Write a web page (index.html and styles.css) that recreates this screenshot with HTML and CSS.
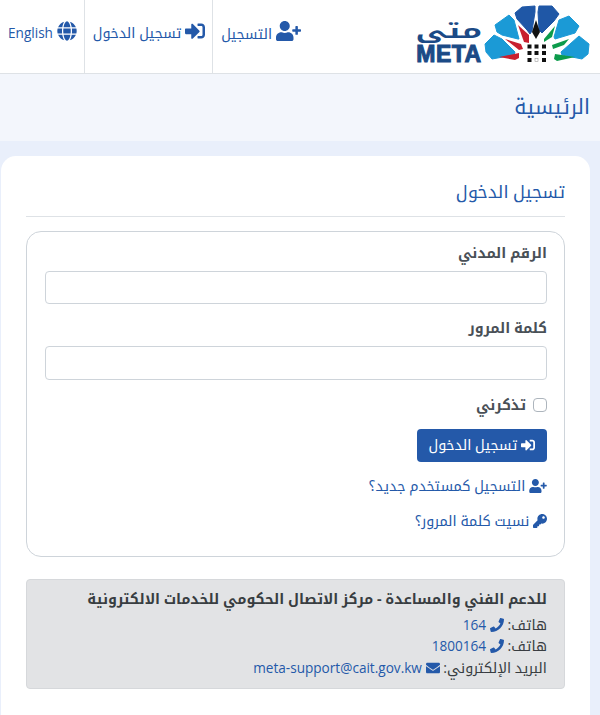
FILE: index.html
```html
<!DOCTYPE html>
<html lang="ar" dir="rtl">
  <head>
    <meta charset="UTF-8" />
    <title>تسجيل الدخول</title>
    <link rel="stylesheet" href="styles.css">
  </head>
  <body>
    <svg class="icon-defs" xmlns="http://www.w3.org/2000/svg">
      <symbol id="i-user-plus" viewBox="0 0 640 512"><path d="M624 208h-64v-64c0-8.800-7.200-16-16-16h-32c-8.800 0-16 7.200-16 16v64h-64c-8.800 0-16 7.200-16 16v32c0 8.800 7.200 16 16 16h64v64c0 8.800 7.200 16 16 16h32c8.800 0 16-7.200 16-16v-64h64c8.800 0 16-7.200 16-16v-32c0-8.800-7.200-16-16-16zm-400 48c70.700 0 128-57.300 128-128S294.700 0 224 0 96 57.300 96 128s57.300 128 128 128zm89.600 32h-16.700c-22.200 10.200-46.900 16-72.900 16s-50.600-5.800-72.900-16h-16.700C60.200 288 0 348.200 0 422.400V464c0 26.500 21.500 48 48 48h352c26.500 0 48-21.500 48-48v-41.600c0-74.200-60.200-134.400-134.400-134.400z"/></symbol>
      <symbol id="i-sign-in" viewBox="0 0 512 512"><path d="M416 448h-84c-6.600 0-12-5.400-12-12v-40c0-6.600 5.400-12 12-12h84c17.700 0 32-14.300 32-32V160c0-17.700-14.300-32-32-32h-84c-6.600 0-12-5.400-12-12V76c0-6.600 5.400-12 12-12h84c53 0 96 43 96 96v192c0 53-43 96-96 96zm-47-201L201 79c-15-15-41-4.500-41 17v96H24c-13.300 0-24 10.700-24 24v96c0 13.300 10.700 24 24 24h136v96c0 21.500 26 32 41 17l168-168c9.300-9.400 9.300-24.600 0-34z"/></symbol>
      <symbol id="i-globe" viewBox="0 0 496 512"><path d="M336.500 160C322 70.700 287.800 8 248 8s-74 62.700-88.500 152h177zM152 256c0 22.200 1.200 43.500 3.300 64h185.300c2.100-20.500 3.300-41.800 3.300-64s-1.200-43.500-3.300-64H155.300c-2.100 20.500-3.300 41.800-3.300 64zm324.700-96c-28.600-67.900-86.500-120.400-158-141.600 24.400 33.800 41.200 84.700 50 141.600h108zM177.200 18.400C105.800 39.600 47.800 92.100 19.300 160h108c8.700-56.900 25.500-107.800 49.900-141.600zM487.400 192H372.700c2.100 21 3.300 42.500 3.300 64s-1.200 43-3.300 64h114.600c5.500-20.500 8.600-41.800 8.600-64s-3.100-43.500-8.500-64zM120 256c0-21.500 1.200-43 3.300-64H8.600C3.200 212.500 0 233.800 0 256s3.200 43.500 8.600 64h114.600c-2-21-3.200-42.500-3.200-64zm39.500 96c14.500 89.300 48.700 152 88.500 152s74-62.700 88.500-152h-177zm159.300 141.600c71.400-21.200 129.400-73.700 158-141.600h-108c-8.800 56.900-25.600 107.800-50 141.600zM19.300 352c28.600 67.900 86.500 120.400 158 141.600-24.400-33.800-41.200-84.700-50-141.600h-108z"/></symbol>
      <symbol id="i-phone" viewBox="0 0 512 512"><path d="M493.400 24.600l-104-24c-11.300-2.600-22.900 3.300-27.500 13.900l-48 112c-4.200 9.800-1.400 21.300 6.900 28l60.600 49.600c-36 76.700-98.900 140.500-177.200 177.200l-49.600-60.600c-6.800-8.300-18.200-11.100-28-6.900l-112 48C3.900 366.500-2 378.100.6 389.400l24 104C27.100 504.200 36.700 512 48 512c256.100 0 464-207.500 464-464 0-11.200-7.700-20.900-18.600-23.400z"/></symbol>
      <symbol id="i-envelope" viewBox="0 0 512 512"><path d="M502.300 190.800c3.900-3.100 9.700-.2 9.700 4.700V400c0 26.500-21.500 48-48 48H48c-26.500 0-48-21.500-48-48V195.600c0-5 5.700-7.800 9.700-4.700 22.400 17.400 52.100 39.500 154.100 113.600 21.100 15.400 56.700 47.800 92.200 47.600 35.700.3 72-32.800 92.300-47.600 102-74.100 131.600-96.300 154-113.700zM256 320c23.200.4 56.600-29.200 73.400-41.400 132.700-96.300 142.800-104.700 173.400-128.700 5.800-4.500 9.200-11.500 9.200-18.900v-19c0-26.500-21.500-48-48-48H48C21.500 64 0 85.500 0 112v19c0 7.400 3.400 14.300 9.200 18.900 30.600 23.900 40.700 32.400 173.400 128.700 16.800 12.200 50.200 41.800 73.400 41.400z"/></symbol>
      <symbol id="i-key" viewBox="0 0 512 512"><path d="M512 176.001C512 273.203 433.202 352 336 352c-11.220 0-22.190-1.062-32.827-3.069l-24.012 27.014A23.999 23.999 0 0 1 261.223 384H224v40c0 13.255-10.745 24-24 24h-40v40c0 13.255-10.745 24-24 24H24c-13.255 0-24-10.745-24-24v-78.059c0-6.365 2.529-12.470 7.029-16.971l161.802-161.802C163.108 213.814 160 195.271 160 176 160 78.798 238.797.001 335.999 0 433.488-.001 512 78.511 512 176.001zM336 128c0 26.510 21.490 48 48 48s48-21.490 48-48-21.490-48-48-48-48 21.490-48 48z"/></symbol>
    </svg>

    <div class="header">
      <a class="logo" href="#">
        <svg class="logo-mark" viewBox="0 0 110 66" xmlns="http://www.w3.org/2000/svg">
          <!-- outer petals -->
          <polygon class="p-dark" points="33,11 40,5 53,4 53,10 50,29 48,32 45,28 35,17"/>
          <polygon class="p-dark" points="57,4 70,4 77,12 72,19 60,31 57,28 56,10"/>
          <polygon class="p-light" points="13,23 27,13 32,18 37,37 36,37 20,33 15,30"/>
          <polygon class="p-light" points="77,18 87,14 97,24 93,31 73,37 72,35"/>
          <polygon class="p-light" points="3,42 12,33 20,37 33,50 32,53 10,57 4,50"/>
          <polygon class="p-light" points="79,50 97,34 107,42 106,52 100,57 80,53"/>
          <!-- inner shards -->
          <polygon class="p-black" points="54,18 58,30 54,37 50,30"/>
          <polygon class="p-red" points="36,23 47,33 47,41 42,40"/>
          <polygon class="p-green" points="73,24 70,35 62,40 62,37"/>
          <polygon class="p-red" points="23,37 39,42 41,47 37,48"/>
          <polygon class="p-green" points="87,37 82,43 71,47 70,43"/>
          <polygon class="p-red" points="17,55 37,51 37,56 33,58"/>
          <polygon class="p-green" points="73,52 93,55 75,59 72,57"/>
          <!-- centre squares -->
          <g class="p-black">
            <rect x="45.500" y="42.500" width="4" height="4"/><rect x="52.500" y="42.500" width="4" height="4"/><rect x="60" y="42.500" width="4" height="4"/>
            <rect x="45.500" y="49" width="4" height="4"/><rect x="52.500" y="49" width="4" height="4"/><rect x="60" y="49" width="4" height="4"/>
            <rect x="45.500" y="56" width="4" height="4"/><rect x="60" y="56" width="4" height="4"/>
          </g>
          <rect class="p-gap" x="53" y="56.500" width="3" height="3"/>
        </svg>
        <span class="logo-words">
          <span class="logo-ar">متى</span>
          <span class="logo-en" dir="ltr">META</span>
        </span>
      </a>
      <div class="nav">
        <a class="nav-item" href="#">
          <svg class="icon icon-wide"><use href="#i-user-plus"/></svg>
          التسجيل
        </a>
        <a class="nav-item" href="#">
          <svg class="icon icon-nav"><use href="#i-sign-in"/></svg>
          تسجيل الدخول
        </a>
        <a class="nav-item" href="#">
          <svg class="icon icon-nav"><use href="#i-globe"/></svg>
          <span class="latin">English</span>
        </a>
      </div>
    </div>

    <div class="page-title">
      <h1>الرئيسية</h1>
    </div>

    <div class="main-content">
      <div class="card">
        <h2 class="card-title">تسجيل الدخول</h2>

        <form class="login-box">
          <div class="form-group">
            <label for="civilId">الرقم المدني</label>
            <input type="text" id="civilId" />
          </div>
          <div class="form-group">
            <label for="password">كلمة المرور</label>
            <input type="password" id="password" />
          </div>
          <div class="remember">
            <input type="checkbox" id="remember" />
            <label for="remember">تذكرني</label>
          </div>
          <button type="button" class="submit-button">
            <svg class="icon icon-small"><use href="#i-sign-in"/></svg>
            تسجيل الدخول
          </button>
          <a class="form-link" href="#">
            <svg class="icon icon-wide icon-link"><use href="#i-user-plus"/></svg>
            التسجيل كمستخدم جديد؟
          </a>
          <a class="form-link" href="#">
            <svg class="icon icon-small icon-link"><use href="#i-key"/></svg>
            نسيت كلمة المرور؟
          </a>
        </form>

        <div class="support">
          <div class="support-title">للدعم الفني والمساعدة - مركز الاتصال الحكومي للخدمات الالكترونية</div>
          <div>هاتف: <svg class="icon icon-small"><use href="#i-phone"/></svg> <a class="latin" href="#">164</a></div>
          <div>هاتف: <svg class="icon icon-small"><use href="#i-phone"/></svg> <a class="latin" href="#">1800164</a></div>
          <div>البريد الإلكتروني: <svg class="icon icon-small"><use href="#i-envelope"/></svg> <a class="latin" href="#">meta-support@cait.gov.kw</a></div>
        </div>
      </div>
    </div>
  </body>
</html>
```

FILE: styles.css
```css
* {
  margin: 0;
  padding: 0;
  box-sizing: border-box;
}

html {
  overflow: hidden;
}

body {
  font-family: "Open Sans", "Noto Kufi Arabic", sans-serif;
  font-size: 14.3px;
  line-height: 21px;
  background: #e9effb;
  color: #495057;
  min-height: 715px;
}

a {
  color: #2459a9;
  text-decoration: none;
}

.latin {
  font-size: 13.6px;
}

.icon-defs {
  display: none;
}

.icon {
  width: 16px;
  height: 16px;
  fill: #2459a9;
  vertical-align: -2px;
}

.icon-nav {
  width: 20px;
  height: 20px;
  vertical-align: -3px;
}

.icon-wide {
  width: 25px;
  height: 20px;
  vertical-align: -2px;
}

.icon-small {
  width: 14px;
  height: 14px;
}

.icon-link.icon-wide {
  width: 18px;
  height: 14px;
  vertical-align: -2px;
}

/* header */
.header {
  height: 74px;
  background: #fff;
  border-bottom: 1px solid #dee2e6;
  display: flex;
  justify-content: space-between;
}

.logo {
  display: flex;
  margin-right: 8px;
  padding-top: 2px;
}

.logo-mark {
  width: 110px;
  height: 66px;
}

.p-dark { fill: #1f57a6; stroke: #1f57a6; stroke-width: 1; stroke-linejoin: round; }
.p-light { fill: #1b9ad6; stroke: #1b9ad6; stroke-width: 1; stroke-linejoin: round; }
.p-black { fill: #111; }
.p-red { fill: #c8202f; }
.p-green { fill: #0c9b4b; }
.p-gap { fill: #fff; stroke: #888; stroke-width: 0.5; }

.logo-words {
  display: flex;
  flex-direction: column;
  align-items: center;
  width: 66px;
  padding-top: 17px;
  color: #1b4a86;
  font-weight: 700;
}

.logo-ar {
  font-size: 20px;
  line-height: 24px;
  transform: scaleX(1.6);
}

.logo-en {
  font-family: "Liberation Sans", sans-serif;
  font-size: 23px;
  line-height: 17px;
  letter-spacing: 0.5px;
  margin-top: 3px;
  -webkit-text-stroke: 1px #1b4a86;
}

.nav {
  display: flex;
}

.nav-item {
  height: 73px;
  padding: 21px 7px 0 8px;
  border-right: 1px solid #dee2e6;
  white-space: nowrap;
}

.nav-item:first-child {
  border-right: 0;
}

/* page title */
.page-title {
  height: 67px;
  background: #f3f6fc;
  padding: 17px 10px 0;
}

.page-title h1 {
  font-size: 20.8px;
  line-height: 30px;
  font-weight: 400;
  color: #2459a9;
}

/* card */
.main-content {
  padding: 15px 10px 0 10px;
  padding-left: 1px;
}

.card {
  background: #fff;
  border-radius: 15px 15px 0 0;
  padding: 20px 25px 26px;
  min-height: 560px;
}

.card-title {
  font-size: 17.6px;
  line-height: 30px;
  font-weight: 400;
  color: #2459a9;
  padding-bottom: 10px;
  border-bottom: 1px solid #dee2e6;
  margin-bottom: 14px;
}

.login-box {
  border: 1px solid #ced4da;
  border-radius: 15px;
  padding: 10px 17px 20px 18px;
  margin-bottom: 22px;
  height: 326px;
}

.form-group {
  margin-bottom: 13px;
}

.form-group label {
  display: block;
  font-weight: 700;
  margin-bottom: 8px;
}

.form-group input {
  display: block;
  width: 100%;
  height: 33px;
  border: 1px solid #ced4da;
  border-radius: 4px;
  background: #fff;
}

.form-group:nth-child(2) input {
  height: 34px;
}

.remember {
  display: flex;
  align-items: center;
  gap: 7px;
  margin: 14px 0;
  font-weight: 700;
}

.remember input {
  appearance: none;
  width: 14px;
  height: 14px;
  margin: 0;
  background: #fff;
  border: 1px solid #adb5bd;
  border-radius: 4px;
}

.submit-button {
  display: block;
  height: 33px;
  padding: 0 12px;
  background: #2459a9;
  color: #fff;
  border: none;
  border-radius: 4px;
  font-family: inherit;
  font-size: 14.3px;
  margin-bottom: 13px;
}

.submit-button .icon {
  fill: #fff;
}

.form-link {
  display: block;
  margin-bottom: 14px;
}

/* support box */
.support {
  background: #e2e3e5;
  border: 1px solid #d6d8db;
  border-radius: 4px;
  padding: 8px 17px 10px 20px;
  color: #383d41;
  line-height: 21.6px;
}

.support-title {
  font-weight: 700;
  margin-bottom: 4px;
}
```
